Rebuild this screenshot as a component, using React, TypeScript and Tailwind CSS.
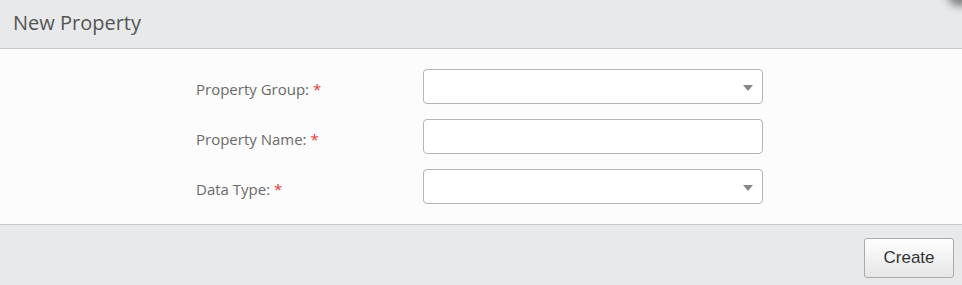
import React from "react";

function Caret() {
  return (
    <svg width="10" height="6" viewBox="0 0 10 6" className="absolute right-[9px] top-[15px]">
      <path d="M0 0 L10 0 L5 6 Z" fill="#888888" />
    </svg>
  );
}

function Row({ label, kind }: { label: string; kind: "select" | "input" }) {
  return (
    <div className="flex items-center h-[35px]">
      <div
        className="w-[227px] mt-[5px] text-[15px] text-[#6a6a6a]"
        style={{ fontFamily: '"Open Sans", "Noto Sans", sans-serif' }}
      >
        {label} <span className="text-[#e53935]">*</span>
      </div>
      <div className="relative w-[340px] h-[35px] rounded-[4px] border border-[#b5b5b5] bg-white">
        {kind === "select" && <Caret />}
      </div>
    </div>
  );
}

export default function App() {
  return (
    <div className="w-[962px] h-[285px] flex flex-col bg-[#e8e9eb] relative overflow-hidden">
      <div className="h-[49px] flex items-center pl-[13px] pb-[3px] border-b border-[#c9c9c9] shrink-0">
        <span
          className="text-[20px] text-[#555555]"
          style={{ fontFamily: '"Open Sans", "Noto Sans", sans-serif' }}
        >
          New Property
        </span>
      </div>
      <div className="h-[176px] bg-[#fcfcfc] border-b border-[#c9c9c9] pt-[20px] pl-[196px] flex flex-col gap-[15px] shrink-0">
        <Row label="Property Group:" kind="select" />
        <Row label="Property Name:" kind="input" />
        <Row label="Data Type:" kind="select" />
      </div>
      <div className="flex-1 flex justify-end items-start pt-[13px] pr-[8px]">
        <button
          className="w-[90px] h-[40px] rounded-[3px] border border-[#aaaaaa] bg-gradient-to-b from-[#ffffff] to-[#e6e6e6] text-[17px] text-[#333333]"
          style={{ fontFamily: '"Liberation Sans", Arial, sans-serif' }}
        >
          Create
        </button>
      </div>
      <div className="absolute -top-[14px] -right-[14px] w-[28px] h-[20px] rounded-full bg-[#555555] blur-[4px] opacity-70" />
    </div>
  );
}
